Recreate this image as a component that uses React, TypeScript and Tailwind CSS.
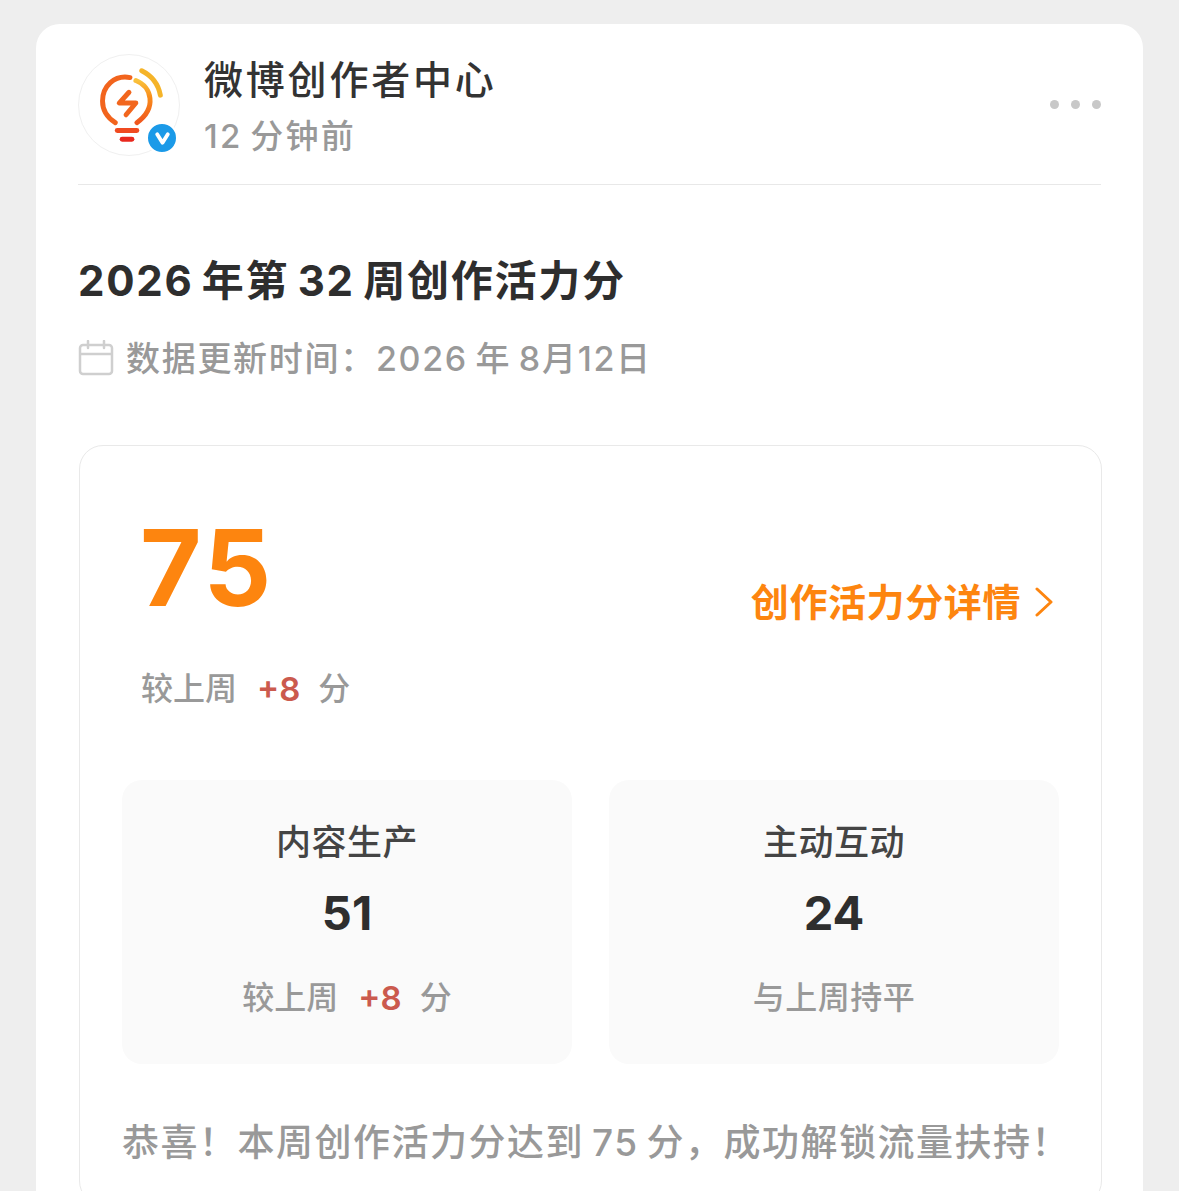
const sans = 'font-["Inter","Noto_Sans_CJK_SC",sans-serif]';

function Avatar() {
  return (
    <div className="relative w-[102px] h-[102px] rounded-full border border-[#f0f0f0] shrink-0">
      <svg viewBox="0 0 102 102" className="w-full h-full" fill="none" strokeLinecap="round">
        <defs>
          <linearGradient id="bulb" x1="0" y1="1" x2="0" y2="0">
            <stop offset="0" stopColor="#f0561e" />
            <stop offset="0.6" stopColor="#f98c1a" />
            <stop offset="1" stopColor="#f9c23c" />
          </linearGradient>
        </defs>
        <path d="M52 23 C 36 20 24 32 24 47 C 24 56 29 64 37 69" stroke="#f2641d" strokeWidth="5" />
        <path d="M58 26 C 74 32 80 54 59 69" stroke="url(#bulb)" strokeWidth="5" />
        <path d="M64 16 C 74 21 81 30 83 41" stroke="#f5b429" strokeWidth="5" />
        <path d="M51 38 L41 49 H58 L48 61" stroke="#f2661d" strokeWidth="5" strokeLinejoin="round" />
        <path d="M39 77 H59" stroke="#f04a20" strokeWidth="5" />
        <path d="M44 86 H54" stroke="#e8281e" strokeWidth="5" />
      </svg>
      <div className="absolute right-[1px] bottom-[1px] w-[32px] h-[32px] rounded-full bg-[#1b9ae8] border-2 border-white flex items-center justify-center">
        <svg viewBox="0 0 16 16" className="w-[17px] h-[17px]" fill="none">
          <path d="M3 4 L8 12 L13 4" stroke="#fff" strokeWidth="3.6" strokeLinejoin="round" strokeLinecap="round" />
        </svg>
      </div>
    </div>
  );
}

function CalendarIcon() {
  return (
    <svg viewBox="0 0 36 36" className="w-[36px] h-[36px] shrink-0 -mt-[2px]" fill="none" stroke="#cfcfcf" strokeWidth="2.5">
      <rect x="2" y="5" width="32" height="29" rx="3" />
      <path d="M2 14 H34" />
      <path d="M10 1 V8 M26 1 V8" strokeLinecap="round" />
    </svg>
  );
}

function Delta({ className = '' }: { className?: string }) {
  return (
    <div className={`flex items-center text-[32px] leading-[40px] font-medium text-[#999999] ${className}`}>
      <span>较上周</span>
      <span className="ml-[20px] text-[#cb5a4e] text-[33px] font-semibold">+8</span>
      <span className="ml-[18px]">分</span>
    </div>
  );
}

function StatCard({ title, value, children }: { title: string; value: string; children: React.ReactNode }) {
  return (
    <div className="bg-[#fafafa] rounded-[20px] h-[284px] flex flex-col items-center pt-[40px]">
      <div className="text-[35px] leading-[44px] tracking-[0.5px] font-medium text-[#444444]">{title}</div>
      <div className="mt-[21px] text-[47px] leading-[56px] font-bold text-[#2e2e2e]">{value}</div>
      <div className="mt-[37px]">{children}</div>
    </div>
  );
}

export default function App() {
  return (
    <div className={`${sans} bg-[#eeeeee] w-[1179px] h-[1191px] overflow-hidden pt-[24px] px-[36px]`}>
      <div className="bg-white rounded-t-[24px] w-[1107px] h-[1167px] px-[42px] pt-[30px]">
        <div className="flex items-start border-b border-[#e8e8e8] h-[131px]">
          <Avatar />
          <div className="ml-[24px] flex-1">
            <div className="text-[39px] leading-[52px] tracking-[2.8px] text-[#333333] font-medium">微博创作者中心</div>
            <div className="mt-[5px] text-[33px] leading-[50px] tracking-[2.2px] font-medium text-[#999999]">{'12\u2009分钟前'}</div>
          </div>
          <div className="flex gap-[12px] mt-[46px]">
            <span className="w-[9px] h-[9px] rounded-full bg-[#c8c8c8]" />
            <span className="w-[9px] h-[9px] rounded-full bg-[#c8c8c8]" />
            <span className="w-[9px] h-[9px] rounded-full bg-[#c8c8c8]" />
          </div>
        </div>

        <h1 className="mt-[66px] text-[42px] leading-[60px] font-bold tracking-[1.75px] text-[#2e2e2e]">{'2026\u2009年第\u200932\u2009周创作活力分'}</h1>
        <div className="mt-[23px] flex items-center gap-[12px] text-[34px] leading-[50px] tracking-[1.7px] font-medium text-[#999999]">
          <CalendarIcon />
          <span>{'数据更新时间：2026\u2009年\u20098月12日'}</span>
        </div>

        <div className="mt-[61px] ml-[1px] w-[1023px] border border-[#e9e9e9] rounded-[24px] px-[42px] pt-[64px] h-[760px]">
          <div className="flex items-end justify-between pl-[18px] pr-[6px]">
            <div className="text-[106px] leading-[116px] tracking-[3px] font-bold text-[#fd850f]">75</div>
            <div className="flex items-center text-[38px] leading-[50px] tracking-[0.6px] font-semibold text-[#fd850f] mb-[-1px]">
              创作活力分详情
              <svg viewBox="0 0 20 32" className="ml-[12px] w-[20px] h-[32px]" fill="none" stroke="#fd850f" strokeWidth="3" strokeLinecap="round" strokeLinejoin="round">
                <path d="M4 3 L18 16 L4 29" />
              </svg>
            </div>
          </div>
          <Delta className="mt-[43px] pl-[19px]" />
          <div className="mt-[71px] grid grid-cols-2 gap-[37px]">
            <StatCard title="内容生产" value="51"><Delta /></StatCard>
            <StatCard title="主动互动" value="24">
              <div className="text-[32px] leading-[40px] tracking-[0.5px] font-medium text-[#999999]">与上周持平</div>
            </StatCard>
          </div>
          <p className="mt-[53px] text-[37px] leading-[52px] tracking-[1.5px] font-medium text-[#999999] whitespace-nowrap">{'恭喜！本周创作活力分达到\u200975\u2009分，成功解锁流量扶持！'}</p>
        </div>
      </div>
    </div>
  );
}
